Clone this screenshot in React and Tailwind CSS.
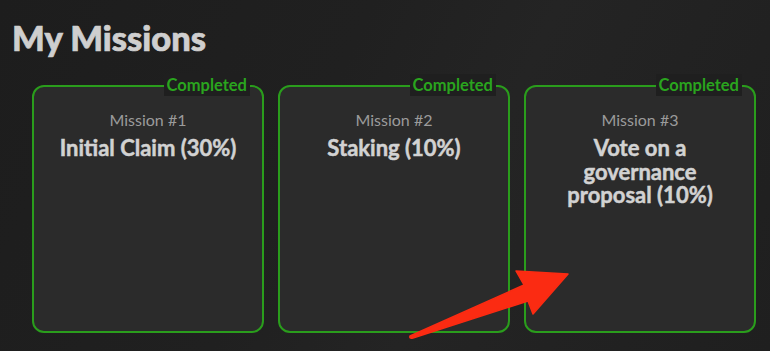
import React from "react";

const missions = [
  { n: 1, lines: ["Initial Claim (30%)"] },
  { n: 2, lines: ["Staking (10%)"] },
  { n: 3, lines: ["Vote on a", "governance", "proposal (10%)"] },
];

function Card({ n, lines }) {
  return (
    <div className="relative w-[232px] h-[248px] shrink-0 rounded-[12px] border-2 border-[#2a9d1c] bg-[#2b2b2b] px-2 pt-[23px] text-center">
      <span className="absolute right-[12px] top-[-13px] bg-[#1f1f1f] px-[3px] text-[16.5px] leading-[22px] font-bold text-[#2aa51e]">
        Completed
      </span>
      <div className="text-[16px] leading-[20px] text-[#9b9b9b]">Mission #{n}</div>
      <div className="mt-[6px] text-[22px] leading-[23.5px] font-bold text-[#d2d2d2] [-webkit-text-stroke:0.5px_#d2d2d2]">
        {lines.map((l) => (
          <div key={l} className="whitespace-nowrap">
            {l}
          </div>
        ))}
      </div>
    </div>
  );
}

export default function App() {
  return (
    <div
      className="relative h-[351px] w-[770px] overflow-hidden bg-[#1e1e1e] bg-[linear-gradient(115deg,#1d1d1d_0%,#202020_40%,#242424_60%,#1f1f1f_100%)]"
      style={{ fontFamily: "Lato, 'Noto Sans', sans-serif" }}
    >
      <h1 className="pl-[12px] pt-[18px] text-[34.5px] leading-[40px] font-black text-[#cfcfcf] [-webkit-text-stroke:0.7px_#cfcfcf]">
        My Missions
      </h1>
      <div className="mt-[27px] flex gap-[14px] pl-[32px]">
        {missions.map((m) => (
          <Card key={m.n} {...m} />
        ))}
      </div>
      <svg className="absolute left-0 top-0" width="770" height="351" viewBox="0 0 770 351">
        <path
          d="M410 336 Q409 339 413 338 L528 301 L533 314 L568 274 L516 271 L524 285 Z"
          fill="#fb2b12"
          stroke="#fb2b12"
          strokeWidth="1.5"
          strokeLinejoin="round"
        />
      </svg>
    </div>
  );
}
